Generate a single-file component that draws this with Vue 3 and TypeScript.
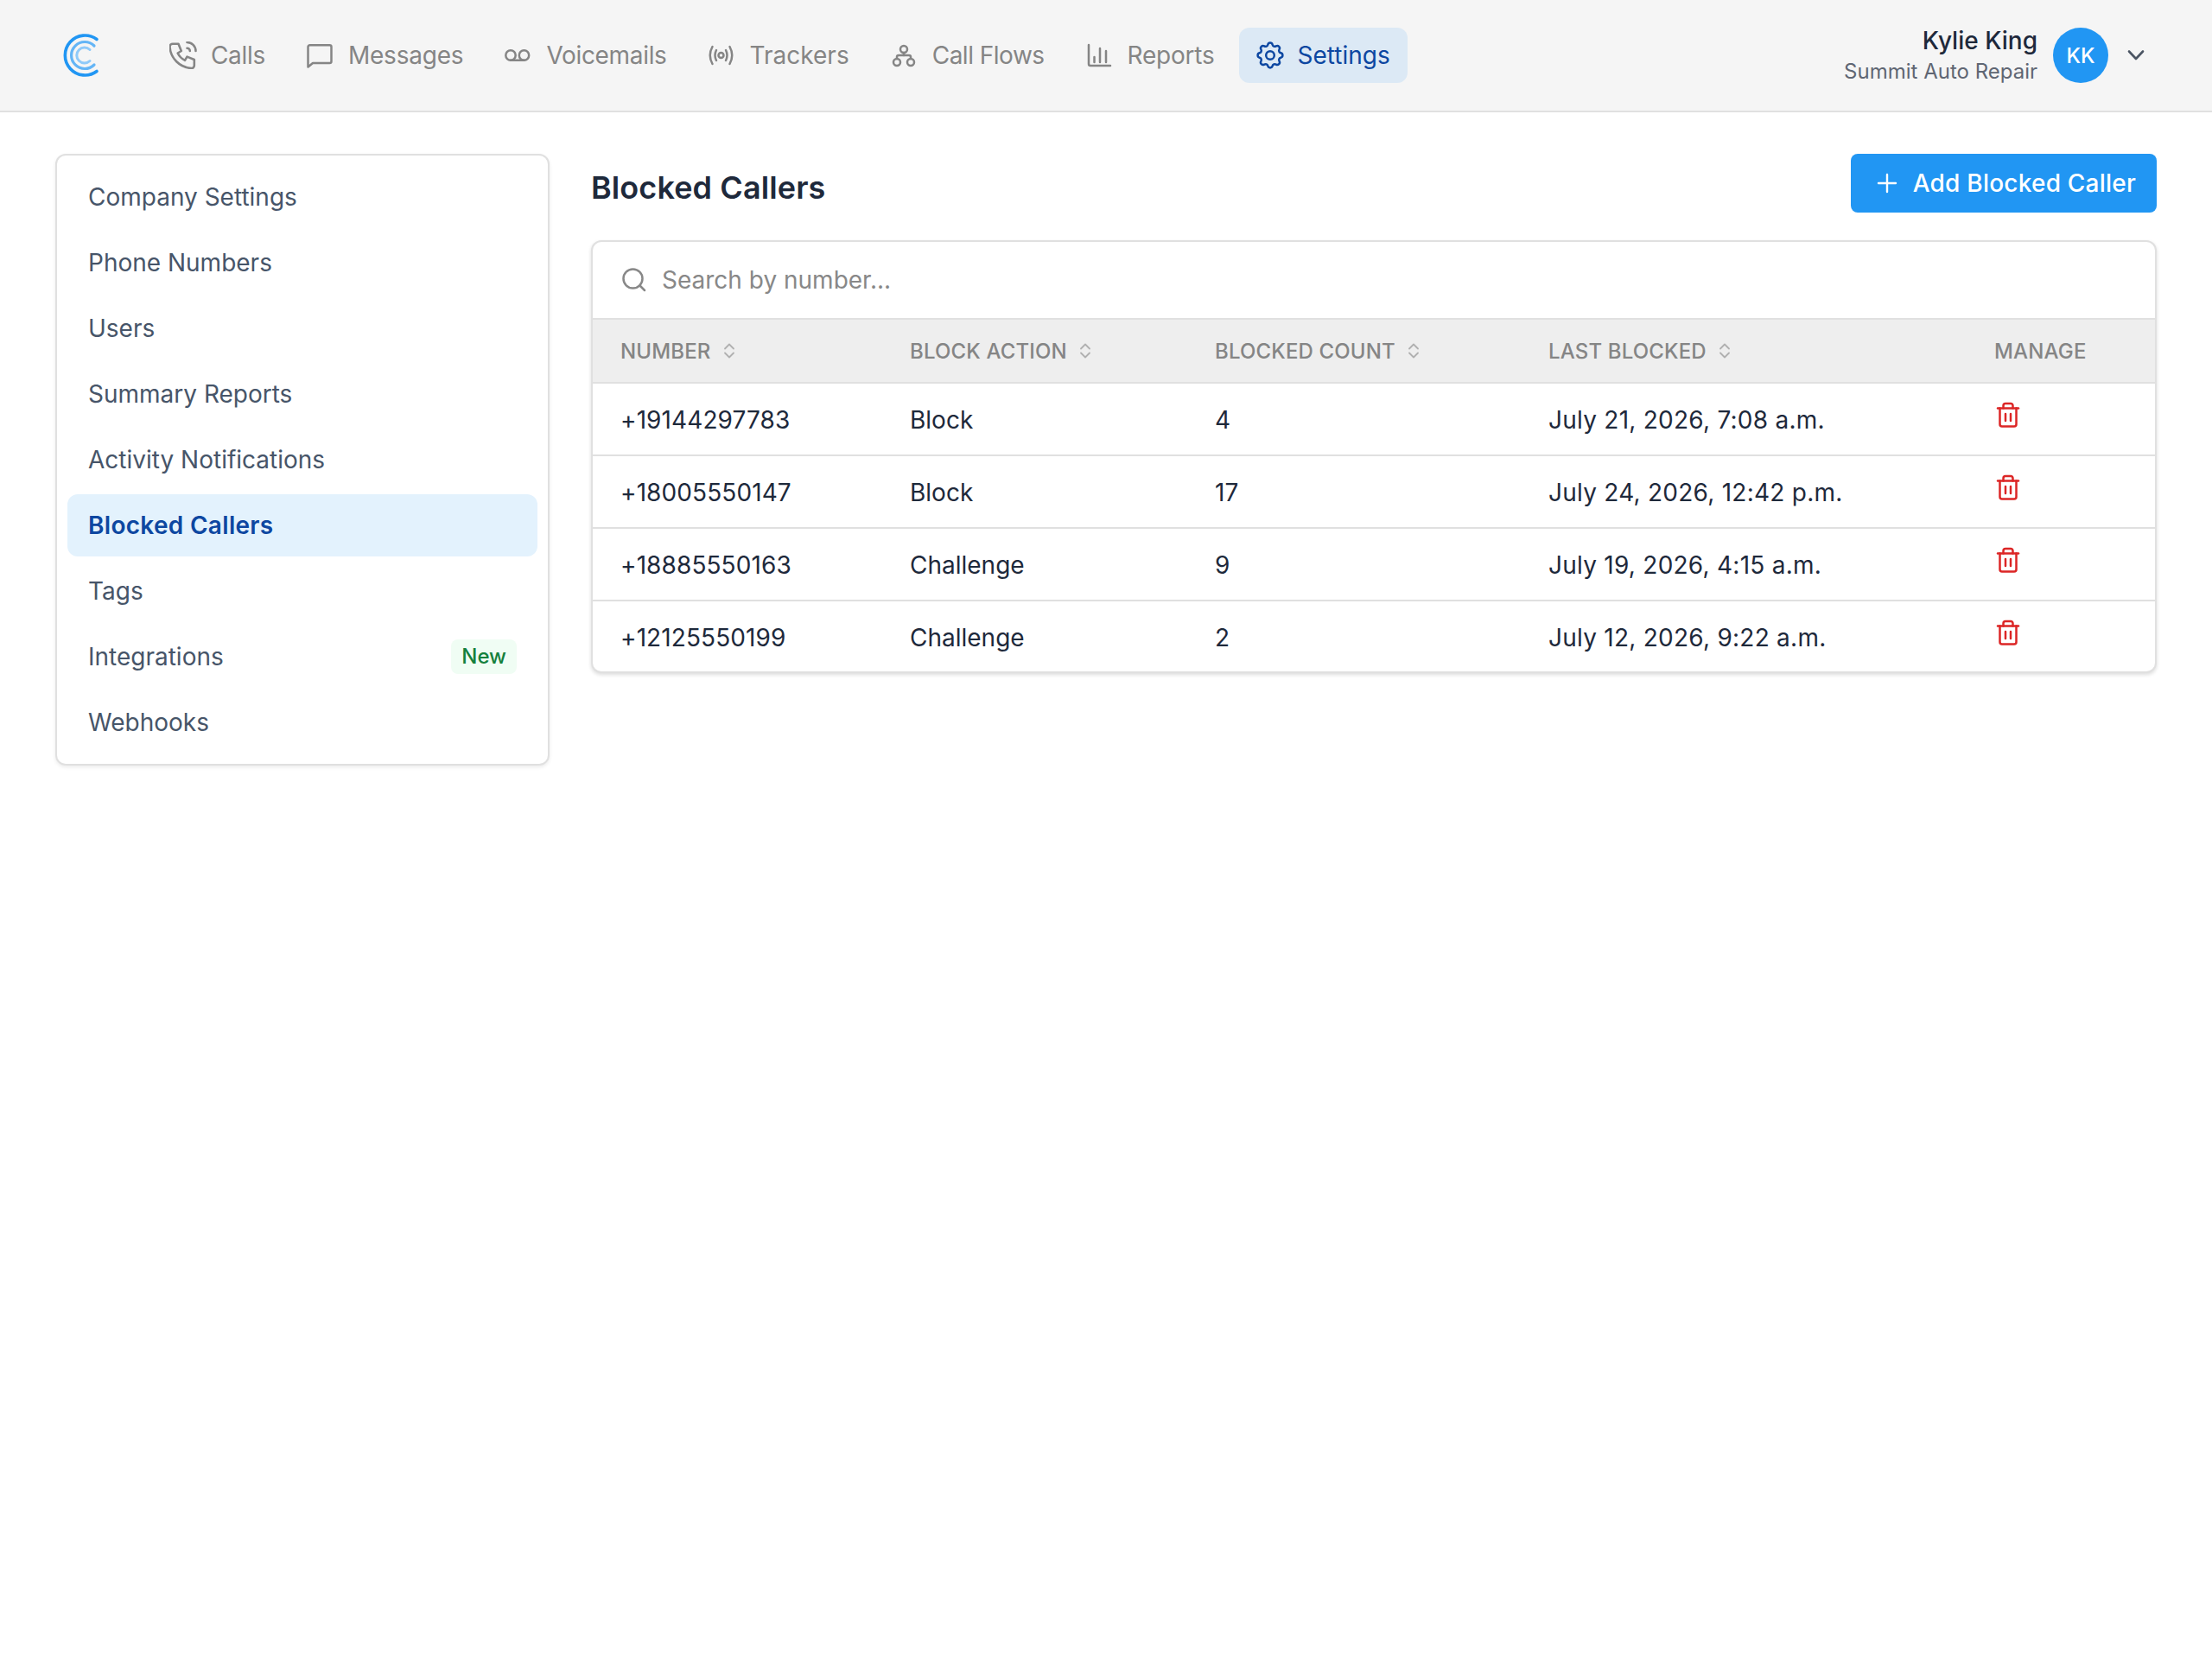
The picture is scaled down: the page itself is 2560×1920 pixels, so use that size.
<script setup lang="ts">
interface NavItem {
  label: string;
  viewBox: string;
  paths: string[];
  spacing: string;
  active?: boolean;
}

// circle as a path so every nav icon can be drawn the same way
const circle = (cx: number, cy: number, r: number) =>
  `M${cx - r} ${cy}a${r} ${r} 0 1 0 ${r * 2} 0a${r} ${r} 0 1 0 ${-r * 2} 0`;

const navItems: NavItem[] = [
  {
    label: 'Calls',
    viewBox: '2.7 2.4 19.2 19.2',
    spacing: '-0.33px',
    paths: [
      'M5 4h4l2 5l-2.5 1.5a11 11 0 0 0 5 5l1.5 -2.5l5 2v4a2 2 0 0 1 -2 2a16 16 0 0 1 -15 -15a2 2 0 0 1 2 -2',
      'M15 7a2 2 0 0 1 2 2',
      'M15 3a6 6 0 0 1 6 6',
    ],
  },
  {
    label: 'Messages',
    viewBox: '0 0 32 32',
    spacing: '-0.2px',
    paths: ['M3.5 4.2H26.5a2 2 0 0 1 2 2V23a2 2 0 0 1-2 2H7L1.5 29.5V6.2a2 2 0 0 1 2-2Z'],
  },
  {
    label: 'Voicemails',
    viewBox: '0 0 32 32',
    spacing: '-0.33px',
    paths: [circle(7, 16, 5.7), circle(22.5, 16, 5.7), 'M7 21.7H22.5'],
  },
  {
    label: 'Trackers',
    viewBox: '0 0 32 32',
    spacing: '0',
    paths: [
      circle(14.5, 16, 3),
      'M9 10Q6 16 9 22',
      'M20 10Q23 16 20 22',
      'M4.5 6Q-1 16 4.5 26',
      'M24.5 6Q30 16 24.5 26',
    ],
  },
  {
    label: 'Call Flows',
    viewBox: '0 0 32 32',
    spacing: '-0.5px',
    paths: [
      circle(15, 9, 4),
      circle(7, 24, 4),
      circle(23, 24, 4),
      'M15 13V16',
      'M7 20V18a2 2 0 0 1 2-2H21a2 2 0 0 1 2 2V20',
    ],
  },
  {
    label: 'Reports',
    viewBox: '0 0 32 32',
    spacing: '-0.23px',
    paths: ['M3 4V26a2 2 0 0 0 2 2H28', 'M9.5 18V24', 'M16 8V24', 'M23 11V24'],
  },
  {
    label: 'Settings',
    viewBox: '2 2 20 20',
    spacing: '0',
    active: true,
    paths: [
      'M10.325 4.317c.426 -1.756 2.924 -1.756 3.35 0a1.724 1.724 0 0 0 2.573 1.066c1.543 -.94 3.31 .826 2.37 2.37a1.724 1.724 0 0 0 1.065 2.572c1.756 .426 1.756 2.924 0 3.35a1.724 1.724 0 0 0 -1.066 2.573c.94 1.543 -.826 3.31 -2.37 2.37a1.724 1.724 0 0 0 -2.572 1.065c-.426 1.756 -2.924 1.756 -3.35 0a1.724 1.724 0 0 0 -2.573 -1.066c-1.543 .94 -3.31 -.826 -2.37 -2.37a1.724 1.724 0 0 0 -1.065 -2.572c-1.756 -.426 -1.756 -2.924 0 -3.35a1.724 1.724 0 0 0 1.066 -2.573c-.94 -1.543 .826 -3.31 2.37 -2.37c1 .608 2.296 .07 2.572 -1.065',
      circle(12, 12, 3),
    ],
  },
];

const sideItems = [
  { label: 'Company Settings' },
  { label: 'Phone Numbers' },
  { label: 'Users' },
  { label: 'Summary Reports' },
  { label: 'Activity Notifications' },
  { label: 'Blocked Callers', active: true },
  { label: 'Tags' },
  { label: 'Integrations', badge: 'New' },
  { label: 'Webhooks' },
];

const columns = ['Number', 'Block Action', 'Blocked Count', 'Last Blocked'];

const rows = [
  { number: '+19144297783', action: 'Block', count: 4, last: 'July 21, 2026, 7:08 a.m.' },
  { number: '+18005550147', action: 'Block', count: 17, last: 'July 24, 2026, 12:42 p.m.' },
  { number: '+18885550163', action: 'Challenge', count: 9, last: 'July 19, 2026, 4:15 a.m.' },
  { number: '+12125550199', action: 'Challenge', count: 2, last: 'July 12, 2026, 9:22 a.m.' },
];
</script>

<template>
  <div class="app">
    <header class="topbar">
      <svg class="logo" width="64" height="64" viewBox="0 0 64 64" fill="none" stroke-linecap="round">
        <path d="M48 13.5A23 23 0 1 0 48 50.5" stroke="#2196f3" stroke-width="3.6" />
        <path d="M45 21A15.5 15.5 0 1 0 45 43" stroke="#64b5f6" stroke-width="3.2" />
        <path d="M40 25.5A9 9 0 1 0 40 38.5" stroke="#90caf9" stroke-width="3" />
      </svg>

      <nav class="nav">
        <a v-for="item in navItems" :key="item.label" class="nav-item" :class="{ active: item.active }">
          <svg class="nav-icon" width="32" height="32" :viewBox="item.viewBox" fill="none" stroke="currentColor"
            :stroke-width="item.viewBox === '0 0 32 32' ? 2.5 : 1.55" stroke-linecap="round" stroke-linejoin="round">
            <path v-for="d in item.paths" :key="d" :d="d" />
          </svg>
          <span :style="{ letterSpacing: item.spacing }">{{ item.label }}</span>
        </a>
      </nav>

      <div class="user">
        <div class="user-text">
          <div class="user-name">Kylie King</div>
          <div class="user-company">Summit Auto Repair</div>
        </div>
        <div class="avatar">KK</div>
        <svg class="chevron" width="32" height="32" viewBox="0 0 32 32" fill="none" stroke="#4b5563" stroke-width="2.6"
          stroke-linecap="round" stroke-linejoin="round">
          <path d="M8 11.5L16 20L24 11.5" />
        </svg>
      </div>
    </header>

    <div class="page">
      <aside class="sidebar">
        <a v-for="item in sideItems" :key="item.label" class="side-item" :class="{ active: item.active }">
          <span>{{ item.label }}</span>
          <span v-if="item.badge" class="badge">{{ item.badge }}</span>
        </a>
      </aside>

      <main class="content">
        <div class="content-head">
          <h1 class="title">Blocked Callers</h1>
          <button class="add-btn">
            <svg width="28" height="28" viewBox="0 0 28 28" fill="none" stroke="#fff" stroke-width="2.4"
              stroke-linecap="round">
              <path d="M14 4V24M4 14H24" />
            </svg>
            Add Blocked Caller
          </button>
        </div>

        <div class="card">
          <div class="search">
            <svg width="32" height="32" viewBox="0 0 32 32" fill="none" stroke="#888" stroke-width="2.5"
              stroke-linecap="round">
              <circle cx="14.5" cy="14.5" r="11" />
              <path d="M22.5 22.5L28 28" />
            </svg>
            <span>Search by number...</span>
          </div>

          <table class="table">
            <colgroup>
              <col class="col-number" />
              <col class="col-action" />
              <col class="col-count" />
              <col class="col-last" />
              <col />
            </colgroup>
            <thead>
              <tr>
                <th v-for="col in columns" :key="col">
                  <span class="th-inner">
                    {{ col }}
                    <svg width="14" height="20" viewBox="0 0 14 20" fill="none" stroke="#b0b0b0" stroke-width="1.8"
                      stroke-linecap="round" stroke-linejoin="round">
                      <path d="M2 7.5L7 2.5L12 7.5" />
                      <path d="M2 12.5L7 17.5L12 12.5" />
                    </svg>
                  </span>
                </th>
                <th>Manage</th>
              </tr>
            </thead>
            <tbody>
              <tr v-for="row in rows" :key="row.number">
                <td class="number">{{ row.number }}</td>
                <td>{{ row.action }}</td>
                <td>{{ row.count }}</td>
                <td class="last">{{ row.last }}</td>
                <td class="manage">
                  <svg width="32" height="32" viewBox="0 0 32 32" fill="none" stroke="#dc2626" stroke-width="2.5"
                    stroke-linecap="round" stroke-linejoin="round">
                    <path d="M4 8.5H28" />
                    <path d="M10.5 8.5V5.5a2.5 2.5 0 0 1 2.5-2.5H19a2.5 2.5 0 0 1 2.5 2.5V8.5" />
                    <path d="M6.5 8.5V27a2.5 2.5 0 0 0 2.5 2.5H23a2.5 2.5 0 0 0 2.5-2.5V8.5" />
                    <path d="M13 15V23M19 15V23" />
                  </svg>
                </td>
              </tr>
            </tbody>
          </table>
        </div>
      </main>
    </div>
  </div>
</template>

<style scoped>
.app {
  min-height: 1920px;
  background: #fff;
  font-family: Inter, 'Liberation Sans', sans-serif;
  font-size: 28px;
  color: #1e293b;
}

.topbar {
  display: flex;
  align-items: center;
  height: 130px;
  box-sizing: border-box;
  padding: 0 64px;
  background: #f5f5f5;
  border-bottom: 2px solid #e0e0e0;
}

.logo {
  flex: none;
  margin-right: 48px;
}

.nav {
  display: flex;
  gap: 8px;
}

.nav-item {
  display: flex;
  align-items: center;
  gap: 16px;
  height: 64px;
  padding: 0 20px;
  border-radius: 12px;
  color: #858585;
}

.nav-item.active {
  background: #dce9f5;
  color: #0d47a1;
}

.nav-icon {
  flex: none;
}

.user {
  display: flex;
  align-items: center;
  margin-left: auto;
  padding-right: 8px;
}

.user-text {
  text-align: right;
  margin-right: 18px;
}

.user-name {
  font-weight: 500;
  line-height: 36px;
  color: #1e293b;
}

.user-company {
  font-size: 24px;
  line-height: 32px;
  padding-top: 2px;
  color: #5f6673;
}

.avatar {
  display: flex;
  align-items: center;
  justify-content: center;
  width: 64px;
  height: 64px;
  border-radius: 50%;
  background: #2196f3;
  color: #fff;
  font-size: 24px;
  font-weight: 500;
}

.chevron {
  margin-left: 16px;
}

.page {
  display: flex;
  align-items: flex-start;
  gap: 48px;
  padding: 48px 64px;
}

.sidebar {
  display: flex;
  flex-direction: column;
  gap: 4px;
  flex: none;
  width: 572px;
  box-sizing: border-box;
  padding: 12px;
  background: #fff;
  border: 2px solid #e0e0e0;
  border-radius: 12px;
  box-shadow: 0 2px 4px rgba(0, 0, 0, 0.08);
}

.side-item {
  display: flex;
  align-items: center;
  justify-content: space-between;
  height: 72px;
  padding: 0 24px;
  border-radius: 12px;
  color: #475569;
}

.side-item.active {
  background: #e3f2fd;
  color: #0d47a1;
  font-weight: 600;
  letter-spacing: 0.3px;
}

.badge {
  padding: 0 12px;
  line-height: 40px;
  border-radius: 8px;
  background: #f0fdf4;
  color: #15803d;
  font-size: 24px;
  font-weight: 500;
}

.content {
  flex: 1;
  min-width: 0;
}

.content-head {
  display: flex;
  align-items: center;
  justify-content: space-between;
  margin-bottom: 32px;
}

.title {
  margin: 10px 0 0;
  font-size: 36px;
  font-weight: 600;
  color: #1e293b;
  letter-spacing: 0.1px;
}

.add-btn {
  display: flex;
  align-items: center;
  gap: 16px;
  height: 68px;
  padding: 0 24px 0 28px;
  border: none;
  border-radius: 8px;
  background: #2196f3;
  color: #fff;
  font: inherit;
  font-weight: 500;
  letter-spacing: 0.22px;
}

.card {
  background: #fff;
  border: 2px solid #e0e0e0;
  border-radius: 12px;
  box-shadow: 0 2px 4px rgba(0, 0, 0, 0.14);
  overflow: hidden;
}

.search {
  display: flex;
  align-items: center;
  gap: 16px;
  height: 88px;
  padding: 0 32px;
  color: #888;
}

.table {
  width: 100%;
  table-layout: fixed;
  border-collapse: collapse;
}

.col-number {
  width: 335px;
}

.col-action {
  width: 353px;
}

.col-count {
  width: 386px;
}

.col-last {
  width: 516px;
}

.table th {
  height: 72px;
  padding: 0 0 0 32px;
  background: #eee;
  border-top: 2px solid #e0e0e0;
  border-bottom: 2px solid #e0e0e0;
  color: #858585;
  font-size: 24px;
  font-weight: 500;
  text-align: left;
  text-transform: uppercase;
  letter-spacing: 0.15px;
}

.th-inner {
  display: inline-flex;
  align-items: center;
  gap: 14px;
}

.table td {
  height: 84px;
  padding: 2px 0 0 32px;
  box-sizing: border-box;
  border-bottom: 2px solid #e0e0e0;
}

.table tr:last-child td {
  height: 82px;
  border-bottom: none;
}

.table td.number {
  letter-spacing: 0.1px;
}

.table td.last {
  letter-spacing: 0.25px;
}

.table td.manage {
  vertical-align: top;
  padding-top: 20px;
}

.manage svg {
  display: block;
}
</style>

<style>
html,
body {
  background: #fff;
}
</style>
